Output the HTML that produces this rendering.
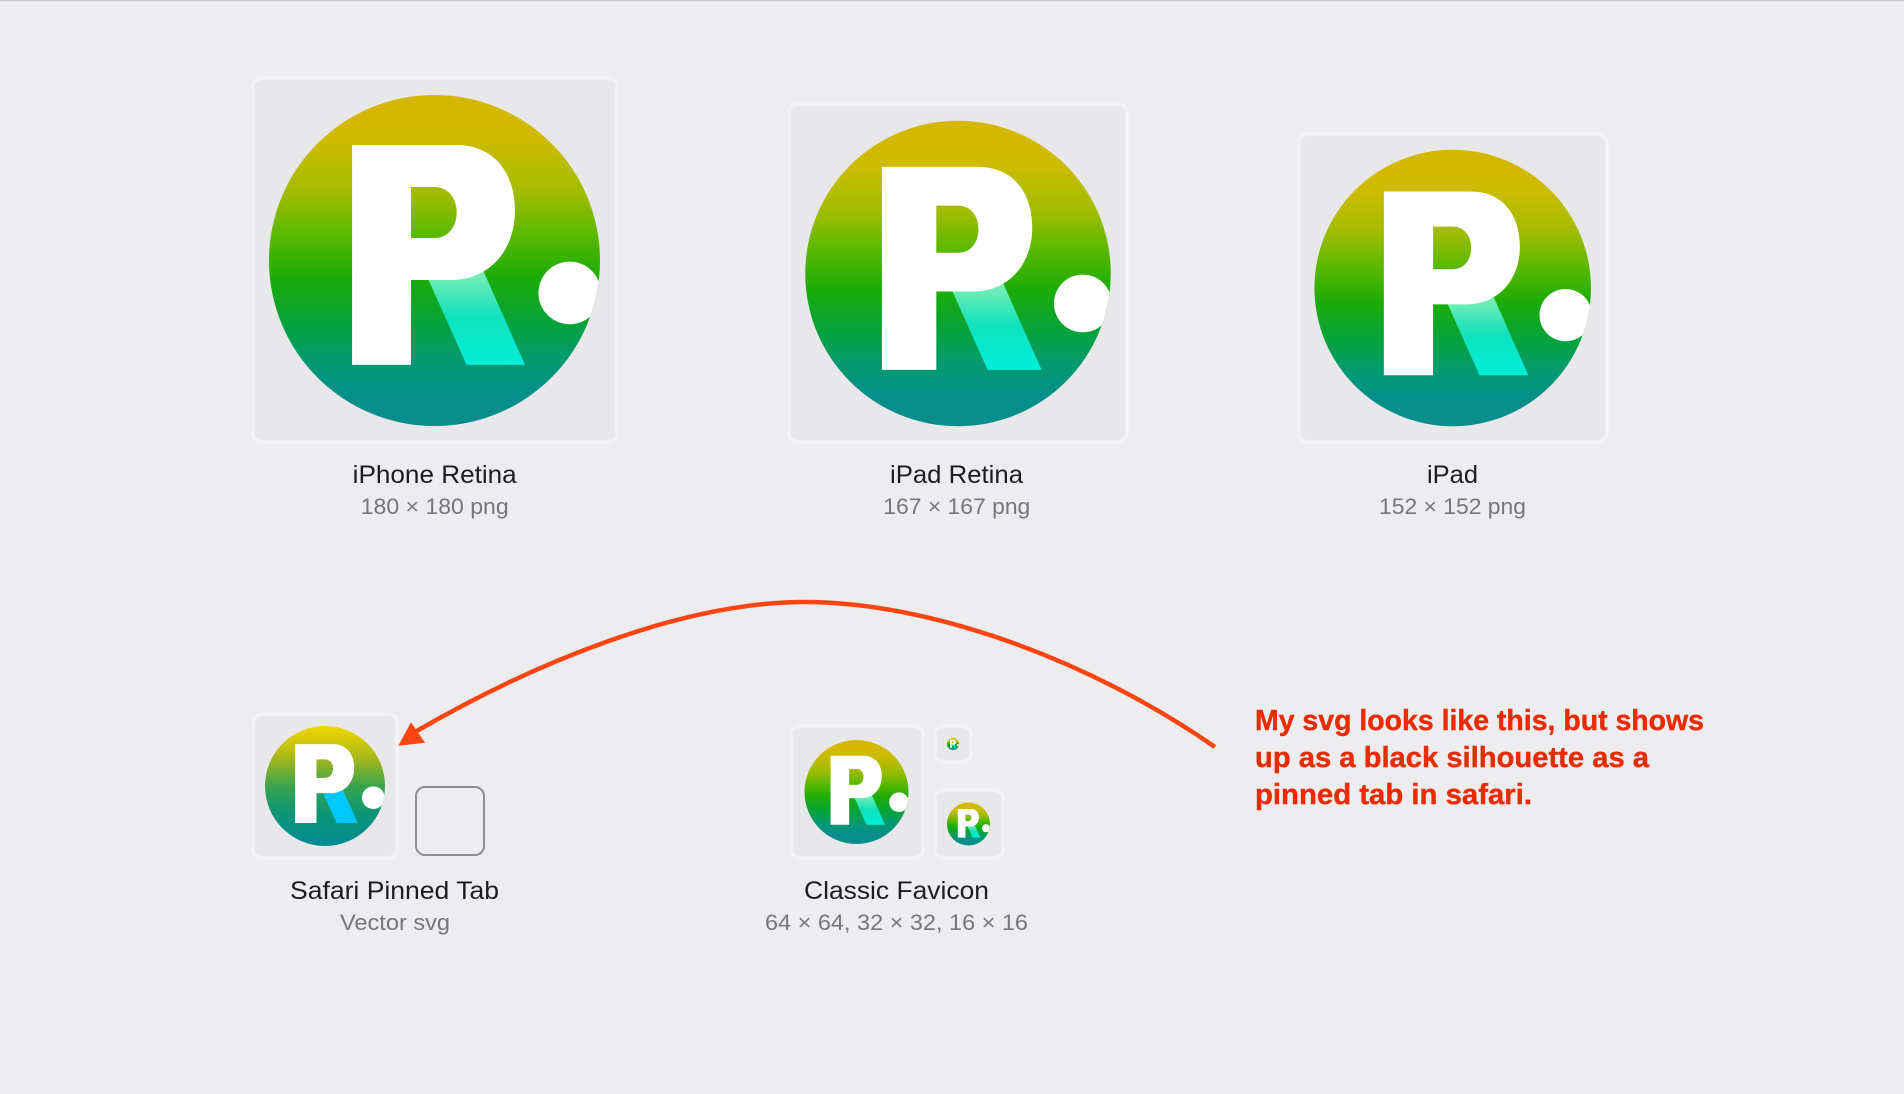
<!DOCTYPE html>
<html lang="en">
<head>
<meta charset="utf-8">
<title>Icons</title>
<style>
html,body{margin:0;padding:0;width:1904px;height:1094px;overflow:hidden;background:#edecef}
svg{display:block}
.l{font-family:"Liberation Sans",sans-serif;font-size:25px;fill:#1d1d20}
.s{font-family:"Liberation Sans",sans-serif;font-size:22px;fill:#77767b}
.r{font-family:"Liberation Sans",sans-serif;font-size:29px;font-weight:700;fill:#e92b00;stroke:#e92b00;stroke-width:.4}
.c{fill:#e8e7ea;stroke:#f3f2f5;stroke-width:4}
</style>
</head>
<body>
<svg width="1904" height="1094" viewBox="0 0 1904 1094" xmlns="http://www.w3.org/2000/svg">
<defs>
<linearGradient id="g" x1="0" y1="0" x2="0" y2="1">
<stop offset="0" stop-color="#d6b600"/>
<stop offset=".14" stop-color="#cfbb00"/>
<stop offset=".3" stop-color="#9fbc00"/>
<stop offset=".42" stop-color="#5bb900"/>
<stop offset=".55" stop-color="#1dac08"/>
<stop offset=".68" stop-color="#07a338"/>
<stop offset=".8" stop-color="#059a70"/>
<stop offset=".9" stop-color="#058f8a"/>
<stop offset="1" stop-color="#0a8e8c"/>
</linearGradient>
<linearGradient id="lg" x1="0" y1="0" x2="0" y2="1">
<stop offset="0" stop-color="#8af0b4"/>
<stop offset=".5" stop-color="#10e2bc"/>
<stop offset="1" stop-color="#00eed8"/>
</linearGradient>
<linearGradient id="sg" x1="0" y1="0" x2="0" y2="1">
<stop offset="0" stop-color="#f1d800"/>
<stop offset=".25" stop-color="#aeba16"/>
<stop offset=".5" stop-color="#3aa44e"/>
<stop offset=".72" stop-color="#0c9674"/>
<stop offset="1" stop-color="#008a96"/>
</linearGradient>
<clipPath id="cc"><circle r="100"/></clipPath>
<path id="p" fill-rule="evenodd" d="M-49.8 -69.8H13C36 -69.8 48.6 -53 48.6 -30C48.6 -6 33 11.8 10 11.8H-14.2V63.1H-49.8ZM-14.2 -44.4V-13.6H0C8 -13.6 13.4 -20 13.4 -29C13.4 -38 8 -44.4 0 -44.4Z"/>
<g id="logo">
<circle r="100" fill="url(#g)"/>
<path d="M-3.7 11.5L19.4 63.1H54.7L28.5 4Z" fill="url(#lg)"/>
<use href="#p" fill="#fff"/>
<g clip-path="url(#cc)"><circle cx="81.7" cy="19.6" r="18.9" fill="#fff"/></g>
</g>
<g id="safari">
<circle r="100" fill="url(#sg)"/>
<path d="M-3.7 11.5L19.4 61.7H54.7L28.5 4Z" fill="#00c8ff"/>
<path fill="#fff" fill-rule="evenodd" d="M-49.8 -69.8H13C36 -69.8 48.6 -53 48.6 -30C48.6 -6 33 11.8 10 11.8H-14.2V61.7H-49.8ZM-14.2 -44.4V-13.6H0C8 -13.6 13.4 -20 13.4 -29C13.4 -38 8 -44.4 0 -44.4Z"/>
<g clip-path="url(#cc)"><circle cx="80.5" cy="19.5" r="18.9" fill="#fff"/></g>
</g>
</defs>

<rect width="1904" height="1094" fill="#edecef"/>
<rect width="1904" height="1" fill="#c6c6c8"/>

<!-- Cards -->
<rect class="c" x="253" y="78" width="364" height="364" rx="9"/>
<use href="#logo" transform="translate(434.5 260.5) scale(1.655)"/>
<rect class="c" x="789" y="104" width="338" height="338" rx="9"/>
<use href="#logo" transform="translate(958 273.5) scale(1.5275)"/>
<rect class="c" x="1299" y="134" width="308" height="308" rx="9"/>
<use href="#logo" transform="translate(1452.7 288) scale(1.3825)"/>

<rect class="c" x="253" y="714" width="144" height="144" rx="9"/>
<use href="#safari" transform="translate(325 786) scale(.6)"/>
<rect x="416" y="787" width="68" height="68" rx="9" fill="none" stroke="#8e8e91" stroke-width="2"/>

<rect class="c" x="791" y="726" width="132" height="132" rx="9"/>
<use href="#logo" transform="translate(856.5 792) scale(.52)"/>
<rect class="c" x="935" y="726" width="36" height="36" rx="9"/>
<use href="#logo" transform="translate(953 744) scale(.06)"/>
<rect class="c" x="935" y="790" width="68" height="68" rx="9"/>
<use href="#logo" transform="translate(968.5 824) scale(.215)"/>

<!-- Labels -->
<text class="l" x="352.7" y="483" textLength="164" lengthAdjust="spacingAndGlyphs">iPhone Retina</text>
<text class="s" x="360.7" y="514" textLength="148" lengthAdjust="spacingAndGlyphs">180 × 180 png</text>
<text class="l" x="890" y="483" textLength="133" lengthAdjust="spacingAndGlyphs">iPad Retina</text>
<text class="s" x="883.3" y="514" textLength="147" lengthAdjust="spacingAndGlyphs">167 × 167 png</text>
<text class="l" x="1427" y="483" textLength="51" lengthAdjust="spacingAndGlyphs">iPad</text>
<text class="s" x="1379" y="514" textLength="147" lengthAdjust="spacingAndGlyphs">152 × 152 png</text>
<text class="l" x="290" y="899" textLength="209" lengthAdjust="spacingAndGlyphs">Safari Pinned Tab</text>
<text class="s" x="340" y="930" textLength="110" lengthAdjust="spacingAndGlyphs">Vector svg</text>
<text class="l" x="804" y="899" textLength="185" lengthAdjust="spacingAndGlyphs">Classic Favicon</text>
<text class="s" x="765" y="930" textLength="263" lengthAdjust="spacingAndGlyphs">64 × 64, 32 × 32, 16 × 16</text>

<!-- Annotation -->
<path d="M1215 747C1090 660 930 602 805 602C680 602 530 665 415 732" fill="none" stroke="#fb4513" stroke-width="4.5"/>
<path d="M398.3 745.7L411 722.3L425 742.7Z" fill="#fb4513"/>
<text class="r" x="1255" y="730" textLength="449" lengthAdjust="spacingAndGlyphs">My svg looks like this, but shows</text>
<text class="r" x="1255" y="767" textLength="394" lengthAdjust="spacingAndGlyphs">up as a black silhouette as a</text>
<text class="r" x="1255" y="804" textLength="277" lengthAdjust="spacingAndGlyphs">pinned tab in safari.</text>
</svg>
</body>
</html>
